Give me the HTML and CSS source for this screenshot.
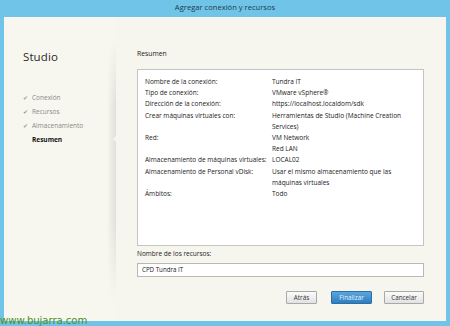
FILE: index.html
```html
<!DOCTYPE html>
<html lang="es">
<head>
<meta charset="utf-8">
<link rel="stylesheet" href="styles.css">
</head>
<body>
<div class="frame">
  <div class="titlebar">Agregar conexión y recursos</div>
  <div class="window">
    <aside class="sidebar">
      <div class="brand">Studio</div>
      <ul class="steps">
        <li class="done"><span class="check">✔</span>Conexión</li>
        <li class="done"><span class="check">✔</span>Recursos</li>
        <li class="done"><span class="check">✔</span>Almacenamiento</li>
        <li class="current">Resumen</li>
      </ul>
      <span class="notch"></span>
    </aside>
    <main class="main">
      <h1 class="heading">Resumen</h1>
      <div class="summary">
        <div class="row"><div class="k">Nombre de la conexión:</div><div class="v">Tundra IT</div></div>
        <div class="row"><div class="k">Tipo de conexión:</div><div class="v">VMware vSphere®</div></div>
        <div class="row"><div class="k">Dirección de la conexión:</div><div class="v">https://localhost.localdom/sdk</div></div>
        <div class="row"><div class="k">Crear máquinas virtuales con:</div><div class="v">Herramientas de Studio (Machine Creation Services)</div></div>
        <div class="row"><div class="k">Red:</div><div class="v">VM Network<br>Red LAN</div></div>
        <div class="row"><div class="k">Almacenamiento de máquinas virtuales:</div><div class="v">LOCAL02</div></div>
        <div class="row"><div class="k">Almacenamiento de Personal vDisk:</div><div class="v">Usar el mismo almacenamiento que las máquinas virtuales</div></div>
        <div class="row"><div class="k">Ámbitos:</div><div class="v">Todo</div></div>
      </div>
      <label class="field-label">Nombre de los recursos:</label>
      <div class="input">CPD Tundra IT</div>
      <div class="buttons">
        <button class="btn">Atrás</button>
        <button class="btn primary">Finalizar</button>
        <button class="btn cancel">Cancelar</button>
      </div>
    </main>
  </div>
</div>
<div class="watermark">www.bujarra.com</div>
</body>
</html>
```
FILE: styles.css
```css
* { box-sizing: border-box; margin: 0; padding: 0; }
html, body { width: 450px; height: 326px; overflow: hidden; }
body {
  background: #6fc4e7;
  font-family: "Open Sans", "Noto Sans", sans-serif;
  position: relative;
}
.frame { display: flex; flex-direction: column; height: 326px; }
.titlebar {
  height: 17px;
  line-height: 14px;
  text-align: center;
  font-size: 7.6px;
  color: #1d3b4e;
}
.window {
  margin: 0 4px;
  height: 304px;
  background: #f6f6ee;
  display: flex;
}
.sidebar {
  width: 112px;
  position: relative;
  padding: 33px 0 0 19px;
  background: #f7f7f0;
}
.sidebar::after {
  content: "";
  position: absolute;
  right: 0;
  top: 22px;
  bottom: 18px;
  width: 9px;
  background: linear-gradient(to right, rgba(0,0,0,0), rgba(0,0,0,0.09));
  -webkit-mask-image: linear-gradient(to bottom, transparent, #000 25%, #000 70%, transparent);
  mask-image: linear-gradient(to bottom, transparent, #000 25%, #000 70%, transparent);
}
.brand {
  font-size: 11.5px;
  color: #2a2a2a;
  line-height: 14px;
  letter-spacing: 0.1px;
}
.steps { list-style: none; margin-top: 27px; }
.steps li {
  font-size: 6.5px;
  line-height: 14px;
  height: 14px;
  padding-left: 9px;
  position: relative;
}
.steps .done { color: #8a8a86; }
.check {
  position: absolute;
  left: 0;
  color: #9a9a96;
  font-size: 6px;
}
.steps .current { color: #111; font-weight: 700; }
.notch {
  position: absolute;
  right: 0;
  top: 119px;
  width: 0; height: 0;
  border-top: 3px solid transparent;
  border-bottom: 3px solid transparent;
  border-right: 3px solid #f6f6ee;
  z-index: 1;
}
.main {
  flex: 1;
  padding: 32px 22px 0 21px;
  display: flex;
  flex-direction: column;
}
.heading {
  font-size: 6.8px;
  font-weight: 400;
  color: #222;
  line-height: 10px;
  height: 20px;
}
.summary {
  height: 177px;
  background: #fff;
  border: 1px solid #c4c4c4;
  padding: 6px 0 0 7px;
}
.row { display: flex; font-size: 6.5px; line-height: 11.2px; color: #222; }
.k { width: 127px; flex: none; }
.v { width: 140px; }
.field-label {
  font-size: 6.5px;
  line-height: 10px;
  color: #222;
  margin-top: 3px;
  height: 14px;
  display: block;
}
.input {
  height: 14px;
  background: #fff;
  border: 1px solid #b8b8b8;
  font-size: 6.2px;
  line-height: 12px;
  padding-left: 4px;
  color: #222;
}
.buttons {
  display: flex;
  justify-content: flex-end;
  margin-top: 14px;
}
.btn {
  font-family: inherit;
  height: 13px;
  width: 31px;
  font-size: 6.3px;
  color: #333;
  background: linear-gradient(#fbfbfb, #e2e2e2);
  border: 1px solid #a8a8a8;
  border-radius: 1px;
}
.btn.primary {
  width: 41px;
  margin-left: 14px;
  color: #eaf4fb;
  background: linear-gradient(#5aa6dc, #2f7dbf);
  border-color: #2b6fa8;
}
.btn.cancel { width: 40px; margin-left: 12px; }
.watermark {
  position: absolute;
  left: 0;
  bottom: 0;
  font-family: "DejaVu Sans", sans-serif;
  font-size: 10.2px;
  line-height: 11px;
  color: #4f8f1c;
  letter-spacing: -0.1px;
}
```
